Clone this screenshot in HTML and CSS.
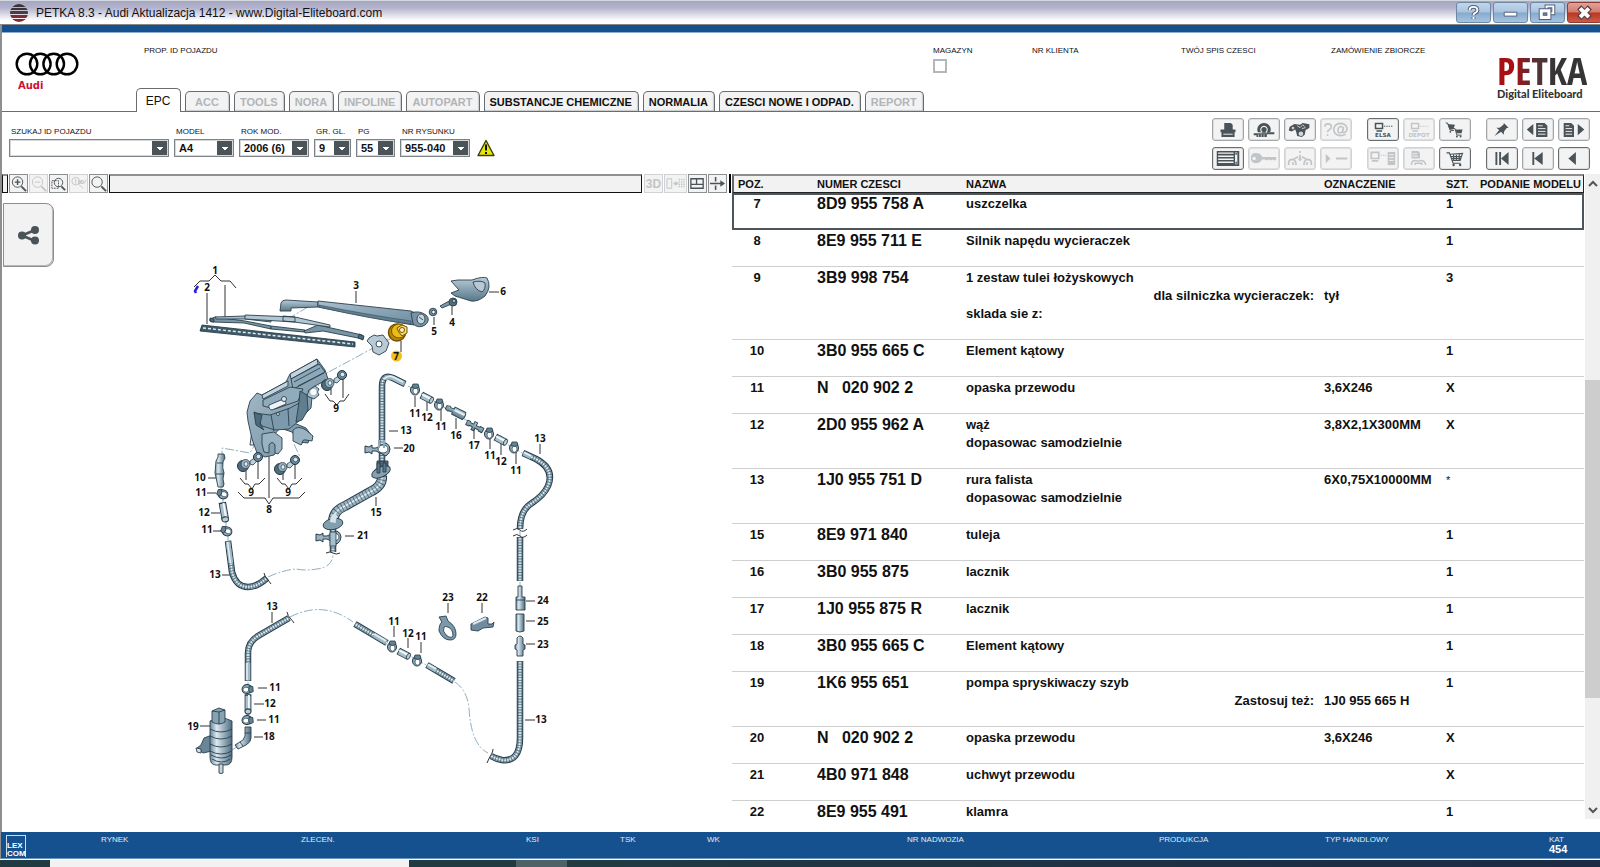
FILE: index.html
```html
<!DOCTYPE html>
<html lang="pl">
<head>
<meta charset="utf-8">
<title>PETKA 8.3 - Audi Aktualizacja 1412</title>
<link rel="stylesheet" href="styles.css">
</head>
<body>
<div class="window">
  <div class="titlebar">
    <svg class="app-icon" viewBox="0 0 18 18"><defs><clipPath id="disc"><circle cx="9" cy="9" r="9"/></clipPath></defs><g clip-path="url(#disc)"><path fill="#3c3438" d="M0 0h18v3H0zM0 4h18v2H0z"/><path fill="#54383c" d="M0 7h18v3H0z"/><path fill="#7d2c32" d="M0 11h18v3H0zM0 15h18v3H0z"/></g></svg>
    <span class="title-text">PETKA 8.3 - Audi Aktualizacja 1412 - www.Digital-Eliteboard.com</span>
    <div class="win-buttons">
      <button class="win" aria-label="Pomoc"><svg viewBox="0 0 34 20"><path d="M13 7.500Q13 4 17 4T21 7.500Q21 9.500 18.500 10.500Q17 11.300 17 12.500M17 14.500V16.500" fill="none" stroke="#52617a" stroke-width="4"/><path d="M13 7.500Q13 4 17 4T21 7.500Q21 9.500 18.500 10.500Q17 11.300 17 12.500M17 14.500V16.500" fill="none" stroke="#fff" stroke-width="2"/></svg></button>
      <button class="win" aria-label="Minimalizuj"><svg viewBox="0 0 34 20"><path d="M10.500 9.500h13v4h-13z" fill="#fff" stroke="#52617a"/></svg></button>
      <button class="win" aria-label="Przywróć"><svg viewBox="0 0 34 20"><path d="M16 3.500h7v7h-7z" fill="none" stroke="#52617a" stroke-width="4"/><path d="M16 3.500h7v7h-7z" fill="none" stroke="#fff" stroke-width="2"/><path d="M10.500 8h8v7h-8z" fill="none" stroke="#52617a" stroke-width="5"/><path d="M10.500 8h8v7h-8z" fill="#7f9cbc" stroke="#fff" stroke-width="3"/><path d="M13 10.500h3v2h-3z" fill="#7f9cbc" stroke="#52617a"/></svg></button>
      <button class="win close" aria-label="Zamknij"><svg viewBox="0 0 34 20"><path d="M11.500 4.500l11 11M22.500 4.500l-11 11" stroke="#5b3a44" stroke-width="6"/><path d="M12.500 5.500l9 9M21.500 5.500l-9 9" stroke="#fff" stroke-width="4"/></svg></button>
    </div>
  </div>
  <div class="stripe"></div>

  <header class="header">
    <div class="brand">
      <svg viewBox="0 0 64 24" class="rings"><g fill="none" stroke="#000" stroke-width="2.400"><circle cx="12" cy="12" r="10.300"/><circle cx="25.300" cy="12" r="10.300"/><circle cx="38.700" cy="12" r="10.300"/><circle cx="52" cy="12" r="10.300"/></g></svg>
      <span class="brand-name">Audi</span>
    </div>
    <span class="cap">PROP. ID POJAZDU</span>
    <label class="cap check">MAGAZYN<input type="checkbox"></label>
    <span class="cap">NR KLIENTA</span>
    <span class="cap">TWÓJ SPIS CZESCI</span>
    <span class="cap">ZAMÓWIENIE ZBIORCZE</span>
    <div class="petka"><strong>PETKA</strong><span>Digital Eliteboard</span></div>
  </header>

  <nav class="tabs">
    <button class="tab active">EPC</button>
    <button class="tab" disabled>ACC</button>
    <button class="tab" disabled>TOOLS</button>
    <button class="tab" disabled>NORA</button>
    <button class="tab" disabled>INFOLINE</button>
    <button class="tab" disabled>AUTOPART</button>
    <button class="tab">SUBSTANCJE CHEMICZNE</button>
    <button class="tab">NORMALIA</button>
    <button class="tab">CZESCI NOWE I ODPAD.</button>
    <button class="tab" disabled>REPORT</button>
  </nav>

  <section class="filters">
    <label class="field w-id">SZUKAJ ID POJAZDU<span class="combo"><select><option></option></select></span></label>
    <label class="field w-model">MODEL<span class="combo"><select><option>A4</option></select></span></label>
    <label class="field w-year">ROK MOD.<span class="combo"><select><option>2006 (6)</option></select></span></label>
    <label class="field w-group">GR. GL.<span class="combo"><select><option>9</option></select></span></label>
    <label class="field w-pg">PG<span class="combo"><select><option>55</option></select></span></label>
    <label class="field w-pic">NR RYSUNKU<span class="combo"><select><option>955-040</option></select></span></label>
    <svg class="warn" viewBox="0 0 18 18"><path d="M9 1.500L17 16.500H1z" fill="#e9e600" stroke="#3c3c14" stroke-linejoin="round" stroke-width="1.400"/><path d="M9 5.500v6M9 13v2" stroke="#111" stroke-width="2"/></svg>

    <div class="tools">
      <div class="tool-group g4">
        <button class="tool" aria-label="Drukuj"><svg viewBox="0 0 32 22"><path d="M12 4h7l2 2v5H12zM8 11h16v3h-1v5H9v-5H8z"/><path d="M11 16h10" stroke="#f2f2f2"/></svg></button>
        <button class="tool" aria-label="Opony"><svg viewBox="0 0 32 22"><path fill-rule="evenodd" d="M16 4a7 7 0 0 1 6.500 10H9.500A7 7 0 0 1 16 4zm0 3a4 4 0 1 0 .01 0z"/><circle cx="16" cy="11" r="2.800"/><path d="M5 15h14v-1h8v2h-8v3H8v-2H5z"/><path d="M10 16v3M13 16v3M16 16v3" stroke="#f2f2f2" stroke-width=".7"/></svg></button>
        <button class="tool" aria-label="Szukaj"><svg viewBox="0 0 32 22"><path d="M5 8l5-3 6 1 3-2 7 1.500v4l-4 2-1 5-3 2.500-5-1-1-4-1-3-4 2-3-1z"/><circle cx="8.500" cy="9.500" r="1.500" fill="#c9cccd"/><circle cx="17" cy="15.500" r="2.500" fill="#d5d8d9"/><path d="M13 7l3 2 3-3 2 2M18 10l4-1" stroke="#f2f2f2" fill="none" stroke-width=".8"/></svg></button>
        <button class="tool" disabled aria-label="Zapytanie"><svg viewBox="0 0 32 22"><path class="ln" d="M4 8q0-3 3.500-3T11 8q0 2-2 3t-2 3m0 2v2M23 8.500q-4-2-5 3 0 4 3 3t3-6.500l-1 5q0 2 2.500 1 3-2 2-5.500-2-4-7-4-6 .5-7 6 0 6.500 7 7 3.500 0 6-1.500" stroke-width="1.700"/></svg></button>
        <button class="tool dark" aria-label="Lista"><svg viewBox="0 0 32 22"><path fill-rule="evenodd" d="M4 3h24v16H4zm1.500 1.500V6H22V4.500zm0 3.200v1.600H22V7.700zm0 3.200v1.600H22v-1.600zm0 3.200v1.600H22v-1.600zm18-9.600V17H26V4.500z"/><path d="M24.700 5v2M24.700 14.500v2" stroke="#4a5357" stroke-width="1.500"/></svg></button>
        <button class="tool" disabled aria-label="Klucz"><svg viewBox="0 0 32 22"><path fill-rule="evenodd" d="M7 5q6 0 7 4.500h15v2.500l-2 1-2-1-2 1-2-1-2 1-2-1h-3Q12 16 7 16t-5-5.500T7 5zM5.500 9a1.800 1.800 0 1 0 .01 0z"/></svg></button>
        <button class="tool" disabled aria-label="Ręce"><svg viewBox="0 0 32 22"><path class="ln" d="M4 18q-1-5 3-6 3 0 4 2l1 4M28 18q1-5-3-6-3 0-4 2l-1 4M9 12l5-3M23 12l-5-3M8 15l1 3M24 15l-1 3M16 3v2M16 7v6" stroke-width="1.800"/><path d="M13.500 11h5L16 14z"/></svg></button>
        <button class="tool" disabled aria-label="Dalej"><svg viewBox="0 0 32 22"><path d="M5 6l5 5-5 5zM16 10h12v2H16z"/></svg></button>
      </div>
      <div class="tool-group g3">
        <button class="tool dark" aria-label="ELSA"><svg viewBox="0 0 32 22"><path class="ln" d="M8 4.500h7.500V10H8zM9 12.500h6" stroke-width="1.600"/><path class="ln" d="M17 7.500h9" stroke-dasharray="1.500 1"/><text x="16" y="19" text-anchor="middle">ELSA</text></svg></button>
        <button class="tool" disabled aria-label="DEPOT"><svg viewBox="0 0 32 22"><path class="ln" d="M8 4.500h7.500V10H8zM9 12.500h6" stroke-width="1.600"/><path class="ln" d="M17 7.500h9" stroke-dasharray="1.500 1"/><text x="16" y="19" text-anchor="middle">DEPOT</text></svg></button>
        <button class="tool" aria-label="Koszyki"><svg viewBox="0 0 32 22"><path d="M8 5l8 1-2 5h-4zM16 11h8l-1 4h-5z"/><path class="ln" d="M6 4h2l3 8h4M14 10h2l2 7h5"/><circle cx="11" cy="13.500" r="1"/><circle cx="18" cy="18.500" r="1"/><circle cx="22" cy="18.500" r="1"/></svg></button>
        <button class="tool" disabled aria-label="Transfer"><svg viewBox="0 0 32 22"><path class="ln" d="M3.500 4.500h8V11h-8zM4 13.500h7" stroke-width="1.800"/><path class="ln" d="M13.500 7.500h6" stroke-dasharray="1.500 1"/><path d="M21 4h8v14h-8z"/><path d="M22.500 7h5M22.500 10h5M22.500 13h5" stroke="#f2f2f2"/></svg></button>
        <button class="tool" disabled aria-label="Dokumenty"><svg viewBox="0 0 32 22"><path d="M8 3h7l2 2v6H8z"/><path d="M9 6h5M9 8.500h6" stroke="#f2f2f2"/><path class="ln" d="M8 18v-2q1-3 4-3l3 1 3-1q4 0 5 4v1M12 18v-2h7v2" stroke-width="1.600"/></svg></button>
        <button class="tool dark" aria-label="Koszyk"><svg viewBox="0 0 32 22"><path class="ln" d="M7 5h3l4 11h8M11 6.500l13-1-2.500 7.500H13.500M11.500 9h11.500M12.500 11h10M14.500 6v7M17.500 6v7M20.500 6v7" stroke-width="1.200"/><circle cx="14.500" cy="18" r="1.300"/><circle cx="21.500" cy="18" r="1.300"/></svg></button>
      </div>
      <div class="tool-group g3">
        <button class="tool" aria-label="Przypnij"><svg viewBox="0 0 32 22"><path d="M18 4l5 5-2 .5-3 4v3l-3-3L8 18l5-6.500-3-2.500h3.500l4-3z"/></svg></button>
        <button class="tool" aria-label="Poprzednia strona"><svg viewBox="0 0 32 22"><path d="M11 5v12l-7-6zM14 4h9l3 3v12H14z"/><path d="M16 7h5M16 10h8M16 13h8M16 16h8" stroke="#f2f2f2"/></svg></button>
        <button class="tool" aria-label="Następna strona"><svg viewBox="0 0 32 22"><path d="M20 5v12l7-6zM5 4h8l3 3v12H5z"/><path d="M7 7h4M7 10h7M7 13h7M7 16h7" stroke="#f2f2f2"/></svg></button>
        <button class="tool dark" aria-label="Pierwszy"><svg viewBox="0 0 32 22"><path d="M9 4h2v14H9zM13 4h2v14h-2zM23 4v14l-8-7z"/></svg></button>
        <button class="tool" aria-label="Wstecz"><svg viewBox="0 0 32 22"><path d="M10 4h2v14h-2zM21 4v14l-9-7z"/></svg></button>
        <button class="tool dark" aria-label="Poprzedni"><svg viewBox="0 0 32 22"><path d="M18 4v14l-8-7z"/></svg></button>
      </div>
    </div>
  </section>

  <main class="work">
    <section class="drawing">
      <div class="mini-bar">
        <span class="grip"></span>
        <button class="mini" aria-label="Powiększ"><svg viewBox="0 0 18 18"><path class="ln" d="M12 12l5 5" stroke-width="2"/><circle class="ln" cx="8" cy="7.500" r="5.500"/><path class="ln" d="M5 7.500h6M8 4.500v6" stroke-width="1.500"/></svg></button>
        <button class="mini" disabled aria-label="Pomniejsz"><svg viewBox="0 0 18 18"><path class="ln" d="M12 12l5 5" stroke-width="2"/><circle class="ln" cx="8" cy="7.500" r="5.500"/><path class="ln" d="M5 7.500h6"/></svg></button>
        <button class="mini" aria-label="Powiększ obszar"><svg viewBox="0 0 18 18"><path class="ln" d="M12 12l4 4" stroke-width="2"/><circle class="ln" cx="9" cy="8" r="4.500"/><path class="ln" d="M2 6h7v8H2z" stroke-dasharray="2 1"/></svg></button>
        <button class="mini" disabled aria-label="100%"><svg viewBox="0 0 18 18"><circle class="ln" cx="6" cy="6.500" r="4"/><path class="ln" d="M9 10l5 4M6 4v5M9 6h2v3H9zM12 6h2v3h-2zM15 9l2-4"/></svg></button>
        <button class="mini" aria-label="Lupa"><svg viewBox="0 0 18 18"><path class="ln" d="M12 12l5 5" stroke-width="2"/><circle class="ln" cx="7.500" cy="7.500" r="5.500"/></svg></button>
        <span class="mini-track"></span>
        <button class="mini" disabled>3D</button>
        <button class="mini wide" disabled aria-label="Siatka"><svg viewBox="0 0 22 18"><path class="ln" d="M2 4h5v10H2z"/><path d="M9 8h2V6l3 3-3 3v-2H9z"/><path class="ln" d="M15 4v10M17.500 4v10M20 4v10" stroke-dasharray="1.500 1" stroke-width="1.500"/></svg></button>
        <button class="mini" aria-label="Układ"><svg viewBox="0 0 18 18"><path class="ln" d="M2 4h13v10H2zM2 10h13M8 4v6" stroke-width="1.400"/></svg></button>
        <button class="mini" aria-label="Podział"><svg viewBox="0 0 18 18"><path class="ln" d="M1 9h12M7 2v5M7 11v5" stroke-width="1.600"/><path d="M12 5.500l5 3.500-5 3.500z"/></svg></button>
        <span class="splitter"></span>
      </div>
      <div class="stage">
        <button class="share" aria-label="Udostępnij"><svg viewBox="0 0 24 20"><path d="M5 10.500L18 5M5 10.500L18 16" stroke="#4a5357" stroke-width="2.500"/><g fill="#4a5357"><circle cx="5" cy="10.500" r="4"/><circle cx="18" cy="5" r="4"/><circle cx="18" cy="15.500" r="4"/></g></svg></button>
        <svg class="diagram" viewBox="180 250 400 540" role="img" aria-label="Spryskiwacz i wycieraczka szyby tylnej">
          <defs>
            <linearGradient id="steel" x1="0" y1="0" x2="0" y2="1"><stop offset="0" stop-color="#b9ccd8"/><stop offset="1" stop-color="#587789"/></linearGradient>
            <linearGradient id="cyl" x1="0" y1="0" x2="1" y2="0"><stop offset="0" stop-color="#67879a"/><stop offset=".3" stop-color="#dbe8ef"/><stop offset="1" stop-color="#4e6d80"/></linearGradient>
            <linearGradient id="block" x1="0" y1="0" x2="1" y2="1"><stop offset="0" stop-color="#aabfcd"/><stop offset="1" stop-color="#6d8b9e"/></linearGradient>
            <g id="clamp"><ellipse cx="0" cy="1" rx="4.500" ry="5" fill="#8fabbb" stroke="#263c49"/><ellipse cx="0.500" cy="2" rx="2.500" ry="3.200" fill="#fff" stroke="#3c5563" stroke-width=".8"/><path d="M-2-5h5l1 3-3 1.500-4-1z" fill="#648293" stroke="#263c49" stroke-width=".8"/></g>
            <g id="sleeve"><path d="M-6-3.300H5V3.300H-6z" fill="#a9bfcb" stroke="#263c49" stroke-width=".9"/><path d="M-6-1H4" stroke="#f2f7f9" stroke-width="2"/><ellipse cx="5" cy="0" rx="1.700" ry="3.300" fill="#b8cbd6" stroke="#263c49" stroke-width=".8"/></g>
            <g id="bush"><ellipse cx="-1" cy="1" rx="5.500" ry="5.500" fill="#506d7e" stroke="#1f3440"/><ellipse cx="1.500" cy="-1" rx="4.500" ry="4.500" fill="#9db4c2" stroke="#263c49" stroke-width=".8"/><ellipse cx="2" cy="-1" rx="2" ry="2.300" fill="#e5eef2" stroke="#263c49" stroke-width=".7"/></g>
            <g id="pin"><path d="M-6 3L0-1l2 3-5 5-3-1z" fill="#bdd0da" stroke="#263c49" stroke-width=".8"/><circle cx="2" cy="-1" r="4.500" fill="#66879a" stroke="#1f3440"/><circle cx="2.500" cy="-1.500" r="2.300" fill="#dce8ee" stroke="#30495a" stroke-width=".7"/></g>
            <g id="clip"><path d="M-16-3l4 1 3-2v3h4L5-6q4 2 4 6T5 7L-5 2h-4v3l-3-2-4 1z" fill="#9bb3c1" stroke="#263c49"/><ellipse cx="2" cy="0" rx="5" ry="4" fill="#fff" stroke="#3c5563"/></g>
            <path id="t1" d="M405 384L393 378Q382 373 382 387V462"/>
            <path id="t2" d="M523 453L536 459Q555 469 548 486Q544 495 532 503Q520 510 520 529"/>
            <path id="t3" d="M520 537V581"/>
            <path id="t4" d="M520 661V738Q520 762 502 760Q496 759 491 756"/>
            <path id="t5" d="M427 665L454 681"/>
            <path id="t6" d="M355 624L387 643"/>
            <path id="t7" d="M289 618L258 636Q248 642 248 653V681"/>
            <path id="t8" d="M228 541L232 572Q236 587 248 587Q257 587 267 578"/>
            <path id="t9" d="M382 476Q383 486 370 492L345 506Q333 511 333 522"/>
            <path id="t10" d="M333 526V552"/>
            <g id="tubes"><use href="#t1"/><use href="#t2"/><use href="#t3"/><use href="#t4"/><use href="#t5"/><use href="#t6"/><use href="#t7"/><use href="#t8"/><use href="#t10"/></g>
          </defs>

          <g class="axis">
            <path d="M308 307L291 317M390 339L325 374M327 377L312 392M257 441L250 453L222 448V456M294 444L300 457M271 444L250 465M377 346L395 334"/>
            <path d="M221 486V490M223 498V502M226 521V526M228 536V541M268 577Q283 570 296 569Q306 571 317 569Q333 567 333 554"/>
            <path d="M290 617Q323 600 353 622M455 682Q467 690 469 708Q471 745 488 753M248 682V727M237 747L230 751M520 531V536M520 582V586"/>
            <path d="M408 386L524 454M389 644L426 665"/>
          </g>

          <g class="leader">
            <path d="M215 275l-6 6h-9l-6 6M215 275l6 6h9l6 7M207 293v31M225 285v32M356 291v12M489 292h10M452 315v-9M434 325v-8M401 341v11"/>
            <path d="M325 394l5 7h3l4 4 3-4h4l5-7M331 389v6M343 379v19M415 396v11M427 400v11M441 409v12M456 418v11M474 428v11M490 438v11M501 443v12M516 452v12M389 431h9M394 448h9M208 478h9"/>
            <path d="M240 478l5 6h3l4 5 3-5h4l6-6M246 471v9M258 462v17M277 478l5 6h3l4 5 3-5h4l6-6M283 471v9M295 462v17M238 492l6 6h21l4 6 4-6h26l6-6M269 456v42M207 493h9M211 513h9M213 531h9M222 575h9M376 497v9M345 536h9"/>
            <path d="M272 612v11M394 626v11M408 638v10M421 642v11M258 688h9M254 704h10M257 720h9M254 737h9M200 726h10M540 444v10M448 603v10M482 603v10M526 601h9M526 621h9M526 644h9M525 720h10"/>
          </g>

          <use href="#tubes" class="tube-edge"/>
          <use href="#tubes" class="tube-body"/>
          <use href="#tubes" class="tube-shine"/>
          <use href="#tubes" class="tube-rib"/>
          <use href="#t9" class="hose-edge"/><use href="#t9" class="hose-body"/><use href="#t9" class="tube-shine"/><use href="#t9" class="hose-rib"/>
          <path class="tube-smooth" d="M404 383.500L393 378Q388 376 385 379M228 542L231 563M524 453.500L531 457M248 663V680M374 635L386 642M428 665.500L436 670"/>
          <path class="tube-shine" d="M403 382L393 377Q388 375 384 379M227.500 542L230.500 563M524 452.500L531 456M247 663V680M374 634L386 641M428 664.500L436 669"/>
          <path class="leader" d="M513 530q4-3 7 0t7-1M513 536q4-3 7 0t7-1M326 553q4-2 7 0t7 0M287 612q1 4 3 6t4 5M264 573q1 4 3 6t4 5M487 763q2-5 4-8t2-6"/>

          <g class="part">
            <path d="M281 303q1-3 5-3l32 2v5l-27 1v3h-11z" fill="url(#steel)"/>
            <path d="M318 301l93 10 6 3-3 11q-33-5-96-18z" fill="url(#block)"/>
            <path d="M319 305q50 10 92 16v3q-40-5-92-17z" fill="#5f7e90" stroke="#39515f" stroke-width=".6"/>
            <path d="M411 313q8-3 15 2 5 5-1 10-6 4-12-1z" fill="#7694a6"/>
            <ellipse cx="421" cy="319" rx="4" ry="5" fill="#c8d7df"/><path d="M419 317l4 3"/>
            <path d="M210 319l5-2 30 4 26 5v3l-27-6-31-1q-4 0-3-3z" fill="#7995a5"/>
            <path d="M215 317l30-1 26 3v3l-26-3-29 0z" fill="#a7bdca"/>
            <path d="M271 326l34 4-1 2-33-3zM304 331l14-6 44 10 1 4-40-8-18 2z" fill="#7995a5"/>
            <path d="M245 315l50 2 35 8v2l-36-5-49-3zM283 316l12 1v5l-12-1z" fill="#b3c7d2"/>
            <path d="M359 334l5 2-1 4-5-2zM210 318l4 1v3l-4-1z" fill="#4b6778"/>
            <path d="M202 325l153 17v5L200 331z" fill="#405a69"/>
            <path d="M203 328l150 16" class="teeth"/>
            <path d="M451 281l7-1 14 0q11-4 15-2 5 9-2 18-7 6-14 5l-16-5-4-3 8-3z" fill="url(#steel)"/>
            <path d="M473 282q8-2 12 1 1 6-3 9-7-2-9-10z" fill="#b6c9d4"/>
            <path d="M440 306l11-6 3 3-12 5z" fill="#7d99a9"/><circle cx="453" cy="302" r="4" fill="#516f80"/><circle cx="454" cy="301" r="1.800" fill="#a9bfcb"/>
            <circle cx="433" cy="312" r="3.800" fill="#7290a1"/><circle cx="433.500" cy="312" r="1.800" fill="#fff"/>
            <path d="M369 338l5-3 3 1 6-1 6 8-3 8-7 4-6-3-1-6-5-5z" fill="#b9cad5"/><circle cx="379" cy="344" r="3" fill="#fff"/>
          </g>
          <g stroke="#725200"><circle cx="397" cy="332.500" r="8.500" fill="#bd8700" stroke-width="1.500"/><ellipse cx="399" cy="331" rx="7.500" ry="7" fill="#edba18"/><path d="M397 328l5-3 5 2v6l-5 3q-4-4-5-8z" fill="#f8dc70"/><circle cx="402" cy="330" r="2.500" fill="#fff3c0"/></g>
          <circle cx="396.500" cy="356" r="5.500" fill="#f5bd1e"/>
          <path d="M198 286l-3 5 1 2" fill="none" stroke="#2020e8" stroke-width="2.500"/>

          <g class="part">
            <path d="M255 409l-5 36h4l4-36z" fill="#dce6eb"/>
            <path d="M262 395l24-13 4-8 27-15 8 11 3 9-13 7-7 5 4 6-1 11-8 8-9 7 12 5 5 7-3 8-9-1-7-10-12-4-6 7 1 10 2 6-3 4-9 2-8-4-5-14-4-18-1-9 3-11 7-8z" fill="url(#block)"/>
            <path d="M262 395l26-14v5l-25 13zM290 374l27-15 1 5-27 15z" fill="#c3d4dd"/>
            <path d="M291 379l28-15 6 8-22 12-10 5z" fill="#8da9b9"/>
            <path d="M294 382l26-14M298 386l26-13" />
            <path d="M263 400l27-13 13 2-5 12-23 8-12-3z" fill="#90abbb"/>
            <path d="M269 405l12-5q5 0 5 4l-14 6q-4-1-3-5z" fill="#edf3f6"/><circle cx="284" cy="399" r="2.500" fill="#d8e5ec"/>
            <path d="M254 413l16 2 20-7 11-6-2 19-10 8-14 1-13-4z" fill="#7c9aab"/>
            <path d="M271 415l3 16M288 409l1 17"/>
            <path d="M300 391l7 4 1 15-6 10-6 2 3-20z" fill="#5f7e90"/>
            <path d="M254 412l8 3-2 9 4 6-8-5z" fill="#4b6a7c"/>
            <path d="M309 390l6-4 4 3q-3 3 0 6l-5 4-7-3z" fill="#a9bfcb"/><circle cx="313.500" cy="392" r="3" fill="#fff" stroke="none"/>
            <path d="M262 434l12-2 8 6 0 11-4 5-3-1v-8q-3-5-6 0v8l-5-1-2-8z" fill="#9ab3c2"/>
            <path d="M293 430q5-5 13 0l7 6-1 5-6-1q-4-1-4 4l-1 1-8-4z" fill="#9ab3c2"/>
            <circle cx="278" cy="414" r="1.500" fill="#d8e5ec"/>
          </g>
          <use href="#bush" x="328" y="384"/><use href="#pin" x="340" y="376"/>
          <use href="#bush" x="244" y="465"/><use href="#pin" x="256" y="458"/>
          <use href="#bush" x="281" y="468"/><use href="#pin" x="293" y="461"/>

          <use href="#clamp" x="415" y="389"/><use href="#clamp" x="439" y="404"/><use href="#clamp" x="489" y="433"/><use href="#clamp" x="514" y="447"/>
          <use href="#clamp" x="392" y="646"/><use href="#clamp" x="417" y="660"/>
          <g transform="translate(222 494) rotate(-70)"><use href="#clamp"/></g><g transform="translate(226 531) rotate(-70)"><use href="#clamp"/></g>
          <g transform="translate(248 689) rotate(85)"><use href="#clamp"/></g><g transform="translate(248 720) rotate(85)"><use href="#clamp"/></g>
          <g transform="translate(427 398) rotate(28)"><use href="#sleeve"/></g><g transform="translate(501 440) rotate(28)"><use href="#sleeve"/></g><g transform="translate(404 654) rotate(28)"><use href="#sleeve"/></g>
          <g transform="translate(224 512) rotate(80) scale(1.500 1)"><use href="#sleeve"/></g>
          <g transform="translate(248 704) rotate(90) scale(1.500 .9)"><use href="#sleeve"/></g>

          <g class="part">
            <g transform="translate(456 412) rotate(27)"><path d="M-11-1.500l3-1 2 1 3-.5v-2H9q2 4 0 8H-3V2h-3l-2 1-3-1z" fill="url(#steel)"/><path d="M-2-1H9" stroke="#e9f1f5" stroke-width="2"/></g>
            <g transform="translate(475 426) rotate(27)"><path d="M-9-2h3l1 1h3v-3h3v3h4v-1h4v5H5V2H1v3h-3V2h-3l-1 1h-3z" fill="url(#steel)"/></g>
            <path d="M218 454h6l1 4-2 4q-1 6 1 11l-1 6 1 5-1 3h-5l-1-5-2-9 1-12 2-4z" fill="url(#cyl)"/><path d="M217 463h6M216 474h8"/>
            <path d="M518 586h4v11h3v13h-9v-13h2z" fill="url(#cyl)"/><path d="M516 600h9"/>
            <path d="M516 614h8v17q-4 2-8 0z" fill="url(#cyl)"/>
            <path d="M517 638q3-4 6 0v6l2 1v4l-2 1v6h-6v-6l-2-1v-4l2-1z" fill="url(#cyl)"/>
            <path d="M377 461h11v12h-11z" fill="#4b6778"/><path d="M380 461v12M384 461v12"/>
            <ellipse cx="381" cy="472" rx="10" ry="5" fill="#86a2b2" transform="rotate(-25 381 472)"/><path d="M377 463h3v10h-3zM383 463h3v9h-3z" fill="#58778a"/>
            <ellipse cx="333" cy="524" rx="10" ry="5.500" fill="#829fae" transform="rotate(-12 333 524)"/><path d="M330 522q0-7 5-9l3 4q-3 2-2 6z" fill="#d5e2e9" stroke="none"/>
          </g>
          <use href="#clip" x="381" y="449"/><path d="M379 440v8M384 440v8" stroke="#8fabbb" stroke-width="2"/>
          <use href="#clip" x="332" y="537"/><path d="M330 532v14h6v-14z" fill="#a8bfcc" stroke="#263c49" stroke-width=".8"/>
          <g class="part">
            <path fill-rule="evenodd" d="M439 617l7-1 2 5q8 5 8 13 0 6-6 6-7 0-11-9 0-7 3-9zM444 627q-2 4 2 8 5 4 7 1 0-7-5-9-3-1-4 0z" fill="#7b99aa"/>
            <path d="M471 624l14-7 3 1v6h4l2-2-1 5-10 1-5 3-7-1z" fill="#6f8d9e"/><path d="M473 624l13-6" stroke="#dfe9ef" stroke-width="2"/>
            <path d="M245 727h6v11q0 4-5 7l-8 4-3-4 8-5 2-4z" fill="url(#cyl)"/><path d="M245 733h6M240 742l3 4"/>
            <path d="M197 748l4-3 3-7 8-3v16l-9 2-4-3z" fill="#688698"/><path d="M196 748l5 1v4l-4-1z" fill="#d5e2e8"/>
            <path d="M210 721q11-6 22 0v36q0 8-6 8h-10q-6 0-6-8z" fill="url(#cyl)"/>
            <path d="M212 711l7-3 6 2v12q-6 4-13 0z" fill="#87a3b3"/><path d="M212 711l7 1 6-2M219 712v12" stroke="#283f4d"/>
            <path d="M210 729q11 6 22 0M210 736q11 6 22 0M210 744q11 6 22 0M210 751q11 6 22 0M211 755q11 6 20 0M212 759q10 6 18 0"/>
            <path d="M219 764h4v9q-2 1-4 0z" fill="#c3d3dc"/>
          </g>

          <g class="num">
            <text x="215" y="274">1</text><text x="207" y="291">2</text><text x="356" y="289">3</text><text x="503" y="295">6</text><text x="452" y="326">4</text><text x="434" y="335">5</text><text x="396" y="360">7</text>
            <text x="336" y="412">9</text><text x="415" y="417">11</text><text x="427" y="421">12</text><text x="441" y="430">11</text><text x="456" y="439">16</text><text x="474" y="449">17</text><text x="490" y="459">11</text><text x="501" y="465">12</text><text x="516" y="474">11</text>
            <text x="406" y="434">13</text><text x="409" y="452">20</text><text x="200" y="481">10</text><text x="251" y="496">9</text><text x="288" y="496">9</text><text x="269" y="513">8</text><text x="201" y="496">11</text><text x="204" y="516">12</text><text x="207" y="533">11</text><text x="215" y="578">13</text><text x="376" y="516">15</text><text x="363" y="539">21</text>
            <text x="272" y="610">13</text><text x="394" y="625">11</text><text x="408" y="637">12</text><text x="421" y="640">11</text><text x="275" y="691">11</text><text x="270" y="707">12</text><text x="274" y="723">11</text><text x="269" y="740">18</text><text x="193" y="730">19</text>
            <text x="540" y="442">13</text><text x="448" y="601">23</text><text x="482" y="601">22</text><text x="543" y="604">24</text><text x="543" y="625">25</text><text x="543" y="648">23</text><text x="541" y="723">13</text>
          </g>
        </svg>
      </div>
    </section>

    <section class="list">
      <div class="list-scroll">
        <table class="parts">
          <colgroup><col class="c-pos"><col class="c-no"><col><col class="c-des"><col class="c-qty"><col class="c-mod"></colgroup>
          <thead><tr><th>POZ.</th><th>NUMER CZESCI</th><th>NAZWA</th><th>OZNACZENIE</th><th>SZT.</th><th>PODANIE MODELU</th></tr></thead>
          <tbody>
            <tr class="selected"><td>7</td><td>8D9 955 758 A</td><td>uszczelka</td><td></td><td>1</td><td></td></tr>
            <tr><td>8</td><td>8E9 955 711 E</td><td>Silnik napędu wycieraczek</td><td></td><td>1</td><td></td></tr>
            <tr class="lines4"><td>9</td><td>3B9 998 754</td><td>1 zestaw tulei łożyskowych<p class="note">dla silniczka wycieraczek:</p>sklada sie z:</td><td><p class="second">tył</p></td><td>3</td><td></td></tr>
            <tr><td>10</td><td>3B0 955 665 C</td><td>Element kątowy</td><td></td><td>1</td><td></td></tr>
            <tr><td>11</td><td>N&nbsp;&nbsp; 020 902 2</td><td>opaska przewodu</td><td>3,6X246</td><td>X</td><td></td></tr>
            <tr class="lines3"><td>12</td><td>2D0 955 962 A</td><td>wąż<br>dopasowac samodzielnie</td><td>3,8X2,1X300MM</td><td>X</td><td></td></tr>
            <tr class="lines3"><td>13</td><td>1J0 955 751 D</td><td>rura falista<br>dopasowac samodzielnie</td><td>6X0,75X10000MM</td><td class="star">*</td><td></td></tr>
            <tr><td>15</td><td>8E9 971 840</td><td>tuleja</td><td></td><td>1</td><td></td></tr>
            <tr><td>16</td><td>3B0 955 875</td><td>lacznik</td><td></td><td>1</td><td></td></tr>
            <tr><td>17</td><td>1J0 955 875 R</td><td>lacznik</td><td></td><td>1</td><td></td></tr>
            <tr><td>18</td><td>3B0 955 665 C</td><td>Element kątowy</td><td></td><td>1</td><td></td></tr>
            <tr class="lines3"><td>19</td><td>1K6 955 651</td><td>pompa spryskiwaczy szyb<p class="note">Zastosuj też:</p></td><td><p class="second">1J0 955 665 H</p></td><td>1</td><td></td></tr>
            <tr><td>20</td><td>N&nbsp;&nbsp; 020 902 2</td><td>opaska przewodu</td><td>3,6X246</td><td>X</td><td></td></tr>
            <tr><td>21</td><td>4B0 971 848</td><td>uchwyt przewodu</td><td></td><td>X</td><td></td></tr>
            <tr class="last"><td>22</td><td>8E9 955 491</td><td>klamra</td><td></td><td>1</td><td></td></tr>
          </tbody>
        </table>
      </div>
      <div class="scrollbar">
        <button aria-label="W górę"><svg viewBox="0 0 15 20"><path d="M4 12l4-4 4 4"/></svg></button>
        <div class="gap-top"></div><div class="thumb"></div><div class="gap-bottom"></div>
        <button aria-label="W dół"><svg viewBox="0 0 15 20"><path d="M4 9l4 4 4-4"/></svg></button>
      </div>
    </section>
  </main>

  <footer class="status">
    <div class="lexcom"><b>LEX</b><b>COM</b></div>
    <span>RYNEK</span><span>ZLECEN.</span><span>KSI</span><span>TSK</span><span>WK</span><span>NR NADWOZIA</span><span>PRODUKCJA</span><span>TYP HANDLOWY</span><span>KAT<b>454</b></span>
  </footer>
</div>
<div class="taskbar"><i class="search"></i><i class="running"></i></div>
</body>
</html>
```
FILE: styles.css
```css
* { box-sizing: border-box; }
body {
  margin: 0;
  height: 100vh;
  display: flex;
  flex-direction: column;
  overflow: hidden;
  background: #fff;
  color: #111;
  font-family: "Liberation Sans", Arial, sans-serif;
  font-size: 11px;
}
button { font: inherit; color: inherit; padding: 0; margin: 0; }
svg { display: block; }
p { margin: 0; }

.window { flex: 1; min-height: 0; display: flex; flex-direction: column; border-left: 2px solid #8f8f8f; }

.titlebar {
  height: 25px;
  display: flex;
  align-items: center;
  margin-left: -2px;
  padding-left: 10px;
  border-top: 1px solid #d3d8de;
  border-bottom: 1px solid #888;
  background: linear-gradient(#a6a6c2, #b3b3cc 30%, #fff 85%);
}
.app-icon { width: 18px; height: 18px; }
.title-text { margin-left: 8px; flex: 1; font-size: 12px; }
.win-buttons { display: flex; gap: 2px; margin-right: -2px; }
.win {
  width: 35px;
  height: 21px;
  border: 1px solid #6d88a5;
  border-radius: 3px;
  background: linear-gradient(#c3d6ea, #a9c4df 48%, #86a9cc 52%, #a5c4e2);
}
.win.close { border-color: #8d3b33; background: linear-gradient(#e3a197, #d27c6e 48%, #b93722 52%, #cc5b46); }
.stripe { flex: none; height: 8px; background: #15518f; border-bottom: 1px solid #8eadce; }

.header {
  flex: none;
  height: 55px;
  display: grid;
  grid-template-columns: 142px 1fr 99px 149px 150px 166px 103px;
  align-items: start;
  padding-top: 13px;
}
.cap { font-size: 8px; line-height: 10px; }
.brand { padding: 6px 0 0 13px; }
.rings { width: 64px; height: 24px; }
.brand-name { display: block; margin: 5px 0 0 3px; font: bold 10px/10px "DejaVu Sans", sans-serif; color: #cc1236; }
.check { display: flex; flex-direction: column; gap: 3px; }
.check input { appearance: none; width: 14px; height: 14px; margin: 0; border: 2px solid #b2b7bc; background: #fff; }
.petka { padding-top: 6px; }
.petka strong {
  display: block;
  width: max-content;
  font: bold 38px/36px "Liberation Sans Narrow", "Open Sans Condensed", "Roboto Condensed", "Liberation Sans", sans-serif;
  color: transparent;
  background: linear-gradient(90deg, #a80f14 20%, #63292c 35%, #4a3638 50%, #353535 65%);
  background-clip: text;
  -webkit-background-clip: text;
}
.petka span { display: block; white-space: nowrap; font: 900 11px/12px Lato, sans-serif; color: #333; }

.tabs { flex: none; height: 24px; display: flex; align-items: flex-end; gap: 4px; padding-left: 134px; border-bottom: 1px solid #666c70; }
.tab {
  height: 20px;
  min-width: 45px;
  padding: 1px 6px 0 5px;
  border: 1px solid #666c70;
  border-bottom: 0;
  border-radius: 5px 5px 0 0;
  background: #f3f3f3;
  box-shadow: inset -1px -1px 1px #c9cbcd;
  font-weight: bold;
  white-space: nowrap;
}
.tab:disabled { color: #b1b5b9; }
.tab.active { height: 24px; background: #fff; box-shadow: none; margin-bottom: -1px; font-size: 12px; font-weight: normal; }

.filters { flex: none; height: 62px; display: flex; align-items: flex-start; gap: 5px; padding: 6px 10px 0 7px; }
.field { display: flex; flex-direction: column; gap: 2px; margin-top: 8px; font-size: 8px; line-height: 11px; text-indent: 2px; white-space: nowrap; }
.combo { position: relative; display: block; height: 18px; text-indent: 0; }
.combo select {
  appearance: none;
  width: 100%;
  height: 18px;
  padding: 0 0 0 4px;
  border: 1px solid #7c8286;
  border-radius: 0;
  background: #fff;
  box-shadow: inset 0 0 0 1px #d5d7d8;
  color: #111;
  font: bold 11px "Liberation Sans", Arial, sans-serif;
}
.combo::after {
  content: "";
  position: absolute;
  right: 2px;
  top: 2px;
  width: 15px;
  height: 14px;
  pointer-events: none;
  background: linear-gradient(#fff, #fff) 5px 6px / 6px 1px no-repeat, linear-gradient(#fff, #fff) 6px 7px / 4px 1px no-repeat, linear-gradient(#fff, #fff) 7px 8px / 2px 1px no-repeat, #4b5458;
}
.w-id { width: 160px; }
.w-model { width: 60px; }
.w-year { width: 70px; }
.w-group { width: 37px; }
.w-pg { width: 39px; }
.w-pic { width: 70px; }
.warn { width: 18px; height: 18px; margin: 21px 0 0 2px; }

.tools { margin-left: auto; display: flex; gap: 15px; }
.tool-group { display: grid; gap: 6px 4px; }
.g4 { grid-template-columns: repeat(4, 32px); }
.g3 { grid-template-columns: repeat(3, 32px); }
.tool { height: 23px; border: 1px solid #a3a7a9; border-radius: 3px; background: #f3f3f3; box-shadow: inset 0 0 0 1px #dcdedf; color: #4a5357; }
.tool.dark { border-color: #666e72; }
.tool svg { width: 100%; height: 100%; fill: currentColor; }
.tool:disabled, .mini:disabled { color: #c2c5c7; border-color: #d0d2d3; }
.ln { fill: none; stroke: currentColor; }
.tool text { font: bold 6px "DejaVu Sans", sans-serif; }

.work { flex: 1; min-height: 0; display: grid; grid-template-columns: 730fr 868fr; }
.drawing { min-width: 0; display: flex; flex-direction: column; }
.mini-bar { display: flex; gap: 1px; height: 19px; }
.grip { width: 6px; border: 1px solid #111; border-top: 2px solid #8f8f8f; background: #f2f2f2; }
.mini { width: 19px; height: 19px; border: 1px solid #8b9093; background: #f3f3f3; color: #4a5357; font-size: 12px; font-weight: bold; }
.mini svg { width: 100%; height: 100%; fill: currentColor; }
.mini.wide { width: 23px; }
.mini-track { flex: 1; margin-right: 1px; border: 1px solid #111; border-top: 2px solid #8f8f8f; background: #f2f2f2; }
.splitter { width: 2px; margin: 0 1px; background: #000; }
.stage { flex: 1; min-height: 0; display: flex; align-items: flex-start; padding-left: 1px; }
.share { flex: none; width: 51px; height: 64px; margin-top: 10px; border: 1px solid #8d8d8d; border-radius: 0 8px 8px 0; background: #f2f2f2; box-shadow: inset -1px -1px 0 #b9b9b9; }
.share svg { width: 24px; height: 20px; margin: auto; }
.diagram { flex: none; width: 400px; height: 540px; margin: 57px 0 0 126px; }

.axis path { fill: none; stroke: #8fb0c2; stroke-width: 1; stroke-dasharray: 9 2 2 2; }
.leader { fill: none; stroke: #333; stroke-width: 1; }
.tube-edge { fill: none; stroke: #243a47; stroke-width: 6.5; }
.tube-body { fill: none; stroke: #8ba7b7; stroke-width: 4.5; }
.tube-shine { fill: none; stroke: #e6eff3; stroke-width: 1.5; }
.tube-rib { fill: none; stroke: #3a5362; stroke-width: 5; stroke-dasharray: 0.9 1.8; stroke-opacity: 0.75; }
.tube-smooth { fill: none; stroke: #a2bac7; stroke-width: 4.5; }
.hose-edge { fill: none; stroke: #243a47; stroke-width: 10; }
.hose-body { fill: none; stroke: #9cb5c3; stroke-width: 8; }
.hose-rib { fill: none; stroke: #3a5362; stroke-width: 8; stroke-dasharray: 1 2.5; stroke-opacity: 0.7; }
.part { stroke: #2a404d; stroke-width: 0.9; stroke-linejoin: round; fill: none; }
.teeth { stroke: #e2ecf0; stroke-width: 1.5; stroke-dasharray: 3 2; }
.num { font: bold 10px "Noto Sans", "Open Sans", sans-serif; text-anchor: middle; fill: #111; }

.list { min-width: 0; min-height: 0; display: flex; padding-bottom: 13px; }
.list-scroll { flex: 1; min-width: 0; overflow: hidden; }
.parts { width: 100%; table-layout: fixed; border-collapse: separate; border-spacing: 0; font-weight: bold; }
.c-pos { width: 85px; }
.c-no { width: 149px; }
.c-des { width: 122px; }
.c-qty { width: 34px; }
.c-mod { width: 104px; }
.parts th { height: 19px; padding: 0; border-top: 2px solid #8f8c8c; border-bottom: 1px solid #222; background: #f2f2f2; font-size: 11px; line-height: 14px; text-align: left; white-space: nowrap; }
.parts th:first-child { padding-left: 4px; border-left: 2px solid #666; }
.parts th:last-child { border-right: 1px solid #222; }
.parts td { height: 37px; padding: 2px 0 0; border-bottom: 1px solid #cfcfcf; font-size: 13px; line-height: 18px; vertical-align: top; white-space: nowrap; }
.parts td:nth-child(1) { padding-right: 35px; text-align: center; }
.parts td:nth-child(2) { font-size: 16px; }
.parts .lines3 td { height: 55px; }
.parts .lines4 td { height: 73px; }
.parts .last td { height: 20px; border: 0; }
.parts .selected { outline: 2px solid #4e565b; outline-offset: -2px; }
.parts .star { font-size: 11px; font-weight: normal; }
.note { padding-right: 10px; text-align: right; }
.second { margin-top: 18px; }
.scrollbar { width: 16px; flex: none; display: flex; flex-direction: column; border-left: 1px solid #fff; background: #f0f0f0; }
.scrollbar button { flex: none; height: 20px; border: 0; background: none; }
.scrollbar svg { width: 15px; height: 20px; fill: none; stroke: #555; stroke-width: 2; }
.gap-top { flex: 186; }
.thumb { flex: 318; background: #cdcdcd; }
.gap-bottom { flex: 101; }

.status {
  flex: none;
  height: 27px;
  display: grid;
  grid-template-columns: 100px 200fr 225fr 94fr 87fr 200fr 252fr 166fr 224fr 51fr;
  margin-left: -1px;
  padding-top: 3px;
  border-bottom: 1px solid #6b94bd;
  background: #15518f;
  color: #e3ebf3;
  font-size: 8px;
  line-height: 9px;
}
.status span b { display: block; font-size: 11px; line-height: 11px; color: #fff; }
.lexcom { width: 20px; height: 22px; margin-left: 5px; padding-top: 6px; border: 1px solid #cfdcea; border-bottom: 0; color: #fff; font-size: 8px; line-height: 8px; }
.lexcom b { display: block; }

.taskbar { flex: none; height: 8px; display: flex; border-top: 1px solid #fff; background: linear-gradient(90deg, #213b42 35%, #1c2a45); }
.taskbar i { display: block; }
.search { width: 359px; margin-left: 50px; background: #f2f2f2; }
.running { width: 51px; margin-left: 107px; background: #4f6268; }
```
